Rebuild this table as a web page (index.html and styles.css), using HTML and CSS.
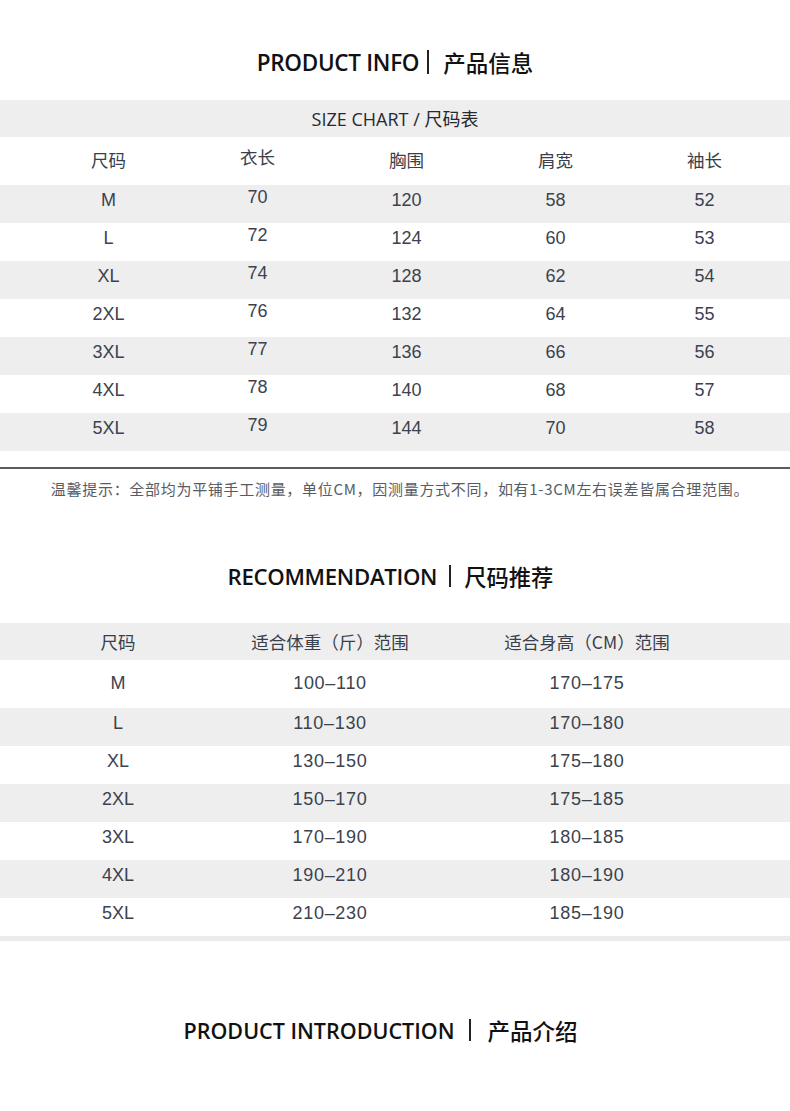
FILE: index.html
```html
<!DOCTYPE html>
<html lang="zh-CN">
<head>
<meta charset="utf-8">
<title>Product Info</title>
<link rel="stylesheet" href="styles.css">
</head>
<body>
<div class="page">
  <h2 class="title title-info">
    <span class="en">PRODUCT INFO</span><span class="bar bar-info"></span><span class="cn">产品信息</span>
  </h2>

  <div class="chart-head">SIZE CHART / <span class="cn-s">尺码表</span></div>

  <div class="size-grid head-row">
    <div class="cell cn-h">尺码</div>
    <div class="cell cn-h up">衣长</div>
    <div class="cell cn-h">胸围</div>
    <div class="cell cn-h">肩宽</div>
    <div class="cell cn-h">袖长</div>
  </div>
  <div class="size-grid row gray"><div class="cell">M</div><div class="cell up">70</div><div class="cell">120</div><div class="cell">58</div><div class="cell">52</div></div>
  <div class="size-grid row"><div class="cell">L</div><div class="cell up">72</div><div class="cell">124</div><div class="cell">60</div><div class="cell">53</div></div>
  <div class="size-grid row gray"><div class="cell">XL</div><div class="cell up">74</div><div class="cell">128</div><div class="cell">62</div><div class="cell">54</div></div>
  <div class="size-grid row"><div class="cell">2XL</div><div class="cell up">76</div><div class="cell">132</div><div class="cell">64</div><div class="cell">55</div></div>
  <div class="size-grid row gray"><div class="cell">3XL</div><div class="cell up">77</div><div class="cell">136</div><div class="cell">66</div><div class="cell">56</div></div>
  <div class="size-grid row"><div class="cell">4XL</div><div class="cell up">78</div><div class="cell">140</div><div class="cell">68</div><div class="cell">57</div></div>
  <div class="size-grid row gray"><div class="cell">5XL</div><div class="cell up">79</div><div class="cell">144</div><div class="cell">70</div><div class="cell">58</div></div>

  <div class="rule"></div>
  <p class="note">温馨提示：全部均为平铺手工测量，单位CM，因测量方式不同，如有1-3CM左右误差皆属合理范围。</p>

  <h2 class="title title-rec">
    <span class="en">RECOMMENDATION</span><span class="bar bar-rec"></span><span class="cn">尺码推荐</span>
  </h2>

  <div class="rec-grid rec-head">
    <div class="cell cn-h">尺码</div>
    <div class="cell cn-h">适合体重（斤）范围</div>
    <div class="cell cn-h">适合身高（CM）范围</div>
  </div>
  <div class="rec-grid rec-first"><div class="cell">M</div><div class="cell num">100–110</div><div class="cell num">170–175</div></div>
  <div class="rec-grid row gray"><div class="cell">L</div><div class="cell num">110–130</div><div class="cell num">170–180</div></div>
  <div class="rec-grid row"><div class="cell">XL</div><div class="cell num">130–150</div><div class="cell num">175–180</div></div>
  <div class="rec-grid row gray"><div class="cell">2XL</div><div class="cell num">150–170</div><div class="cell num">175–185</div></div>
  <div class="rec-grid row"><div class="cell">3XL</div><div class="cell num">170–190</div><div class="cell num">180–185</div></div>
  <div class="rec-grid row gray"><div class="cell">4XL</div><div class="cell num">190–210</div><div class="cell num">180–190</div></div>
  <div class="rec-grid row"><div class="cell">5XL</div><div class="cell num">210–230</div><div class="cell num">185–190</div></div>
  <div class="strip"></div>

  <h2 class="title title-intro">
    <span class="en">PRODUCT INTRODUCTION</span><span class="bar bar-intro"></span><span class="cn">产品介绍</span>
  </h2>
</div>
</body>
</html>
```

FILE: styles.css
```css
* { box-sizing: border-box; }

html, body {
  margin: 0;
  padding: 0;
  background: #ffffff;
}

body {
  font-family: "Liberation Sans", "Noto Sans CJK SC", sans-serif;
  color: #3c424e;
}

.page {
  width: 790px;
  height: 1111px;
  overflow: hidden;
}

/* Titles */
.title {
  display: flex;
  justify-content: center;
  align-items: center;
  height: 32px;
  margin: 0;
  font-weight: normal;
  color: #111111;
}

.title .en {
  font-family: "Open Sans", "Noto Sans CJK SC", sans-serif;
  font-weight: 600;
  font-size: 22.5px;
  letter-spacing: -0.3px;
}

.title .cn {
  font-family: "Noto Sans CJK SC", sans-serif;
  font-weight: 500;
  font-size: 22.5px;
}

.bar {
  display: inline-block;
  width: 2px;
  height: 22px;
  background: #222222;
}

.title-info { margin-top: 46px; }
.bar-info { margin: 0 14px 0 8px; height: 24px; }

.title-rec { margin-top: 59px; padding-right: 9px; }
.title-rec .en { font-size: 22.2px; }
.title-rec .cn { font-size: 22.3px; }
.bar-rec { margin: 0 13px 0 12px; }

.title-intro { margin-top: 73px; padding-right: 29px; }
.title-intro .en { letter-spacing: 0; font-size: 21.5px; }
.bar-intro { margin: 0 16px 0 15px; }

/* Size chart */
.chart-head {
  margin-top: 22px;
  height: 37px;
  line-height: 37px;
  background: #eeeeee;
  text-align: center;
  font-family: "Open Sans", "Noto Sans CJK SC", sans-serif;
  font-size: 18px;
  color: #262a30;
}

.cn-s {
  font-family: "Noto Sans CJK SC", sans-serif;
  font-size: 18px;
}

.size-grid {
  display: grid;
  grid-template-columns: repeat(5, 149px);
  padding-left: 34px;
}

.rec-grid {
  display: grid;
  grid-template-columns: 236px 188px 326px;
}

.cell {
  text-align: center;
  font-size: 18px;
}

.num { letter-spacing: 0.7px; }

.cn-h {
  font-family: "Noto Sans CJK SC", sans-serif;
  font-size: 17.5px;
  color: #3a404b;
}

.head-row {
  height: 48px;
  align-items: center;
  padding-bottom: 4px;
}

.row {
  height: 38px;
  line-height: 30px;
  padding-bottom: 10px;
}

.row.gray { background: #eeeeee; }

.up { transform: translateY(-3px); }

.rule {
  margin-top: 16px;
  height: 2px;
  background: #5c5c5c;
}

.note {
  margin: 8px 0 0;
  padding-left: 10px;
  height: 24px;
  line-height: 24px;
  text-align: center;
  font-family: "Noto Sans CJK SC", sans-serif;
  font-size: 15px;
  letter-spacing: 0.7px;
  color: #575c64;
}

/* Recommendation */
.rec-head {
  margin-top: 31px;
  height: 37px;
  align-items: center;
  background: #eeeeee;
}

.rec-first {
  height: 48px;
  align-items: center;
  padding-bottom: 2px;
}

.strip {
  height: 5px;
  background: #ebebeb;
}
```
